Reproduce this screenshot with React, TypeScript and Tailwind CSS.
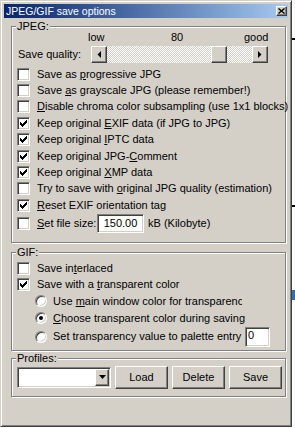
import type { ReactNode } from "react";

const raised =
  "border border-t-white border-l-white border-r-[#404040] border-b-[#404040] shadow-[inset_-1px_-1px_0_#808080] bg-[#d4d0c8]";
const sunken =
  "border border-t-[#808080] border-l-[#808080] border-r-white border-b-white shadow-[inset_1px_1px_0_#404040,inset_-1px_-1px_0_#d4d0c8] bg-white";

function U({ children }: { children: ReactNode }) {
  return <span className="underline decoration-1 underline-offset-[1px]">{children}</span>;
}

function Check({ checked }: { checked?: boolean }) {
  return (
    <span className={`flex h-[13px] w-[13px] shrink-0 items-center justify-center ${sunken}`}>
      {checked && (
        <svg width="7" height="7" viewBox="0 0 7 7" shapeRendering="crispEdges">
          <path
            d="M6 0h1v1h-1z M5 1h2v1h-2z M0 2h1v1h-1z M4 2h3v1h-3z M0 3h2v1h-2z M3 3h3v1h-3z M0 4h5v1h-5z M1 5h3v1h-3z M2 6h1v1h-1z"
            fill="#000"
          />
        </svg>
      )}
    </span>
  );
}

function Radio({ on }: { on?: boolean }) {
  return (
    <span className={`flex h-[12px] w-[12px] shrink-0 items-center justify-center rounded-full ${sunken}`}>
      {on && <span className="h-[4px] w-[4px] rounded-full bg-black" />}
    </span>
  );
}

function CheckRow({ checked, children }: { checked?: boolean; children: ReactNode }) {
  return (
    <div className="flex h-[16.4px] items-center gap-[7px] pl-[5px] whitespace-nowrap">
      <Check checked={checked} />
      <span>{children}</span>
    </div>
  );
}

function Group({ label, className, children }: { label: string; className?: string; children: ReactNode }) {
  return (
    <div
      className={`relative ml-[7px] w-[275px] border border-[#808080] shadow-[inset_1px_1px_0_#fff,1px_1px_0_#fff] ${className ?? ""}`}
    >
      <span className="absolute left-[4px] top-[-7px] bg-[#d4d0c8] px-[1px] leading-[13px]">{label}</span>
      {children}
    </div>
  );
}

function Arrow({ dir }: { dir: "left" | "right" | "down" }) {
  if (dir === "down")
    return (
      <svg width="7" height="4" viewBox="0 0 7 4">
        <polygon points="0,0 7,0 3.5,4" fill="#000" />
      </svg>
    );
  return (
    <svg width="4" height="7" viewBox="0 0 4 7">
      <polygon points={dir === "left" ? "4,0 4,7 0.5,3.5" : "0,0 0,7 3.5,3.5"} fill="#000" />
    </svg>
  );
}

export default function App() {
  return (
    <div className="flex h-[428px] w-[295px] bg-white font-['Liberation_Sans',Arial,sans-serif] text-[11px] leading-[13px] text-black">
      <div className="flex h-[427px] w-[292px] flex-col border border-t-[#d4d0c8] border-l-[#d4d0c8] border-r-[#404040] border-b-[#404040] bg-[#d4d0c8] px-[3px] pt-[3px] shadow-[inset_1px_1px_0_#fff,inset_-1px_-1px_0_#808080]">
        {/* Title bar */}
        <div className="flex h-[14px] items-center bg-linear-to-r from-[#0a246a] to-[#a6caf0] pl-[2px] pr-[1px]">
          <span className="flex-1 text-[10.5px] text-white">JPEG/GIF save options</span>
          <span className={`flex h-[10px] w-[11px] items-center justify-center ${raised}`}>
            <svg width="7" height="6" viewBox="0 0 7 6">
              <path d="M0.5 0.5L6.5 5.5M6.5 0.5L0.5 5.5" stroke="#000" strokeWidth="1.4" />
            </svg>
          </span>
        </div>

        {/* JPEG */}
        <Group label="JPEG:" className="mt-[8px] pb-[8px]">
          <div className="mt-[4px] flex h-[13px]">
            <span className="ml-[76px] w-[83px]">low</span>
            <span className="w-[73px]">80</span>
            <span>good</span>
          </div>
          <div className="mt-[2px] flex h-[17px] items-center pl-[6px]">
            <span className="w-[73px]">Save quality:</span>
            <div className="flex h-[17px] w-[177px]">
              <span className={`flex w-[16px] items-center justify-center ${raised}`}>
                <Arrow dir="left" />
              </span>
              <span className="w-[104px] bg-[image:repeating-conic-gradient(#fff_0%_25%,#d4d0c8_0%_50%)] bg-[length:2px_2px]" />
              <span className={`w-[16px] ${raised}`} />
              <span className="flex-1 bg-[image:repeating-conic-gradient(#fff_0%_25%,#d4d0c8_0%_50%)] bg-[length:2px_2px]" />
              <span className={`flex w-[16px] items-center justify-center ${raised}`}>
                <Arrow dir="right" />
              </span>
            </div>
          </div>
          <div className="mt-[3px]">
            <CheckRow>
              Save as <U>p</U>rogressive JPG
            </CheckRow>
            <CheckRow>
              Save <U>a</U>s grayscale JPG (please remember!)
            </CheckRow>
            <CheckRow>
              <U>D</U>isable chroma color subsampling (use 1x1 blocks)
            </CheckRow>
            <CheckRow checked>
              Keep original <U>E</U>XIF data (if JPG to JPG)
            </CheckRow>
            <CheckRow checked>
              Keep original <U>I</U>PTC data
            </CheckRow>
            <CheckRow checked>
              Keep original JPG-<U>C</U>omment
            </CheckRow>
            <CheckRow checked>
              Keep original <U>X</U>MP data
            </CheckRow>
            <CheckRow>
              Try to save with <U>o</U>riginal JPG quality (estimation)
            </CheckRow>
            <CheckRow checked>
              <U>R</U>eset EXIF orientation tag
            </CheckRow>
          </div>
          <div className="flex h-[20px] items-center gap-[7px] pl-[5px] whitespace-nowrap">
            <Check />
            <span className="w-[53px]">
              <U>S</U>et file size:
            </span>
            <span className={`flex h-[19px] w-[47px] items-center justify-center ${sunken}`}>150.00</span>
            <span className="-ml-[3px]">kB (Kilobyte)</span>
          </div>
        </Group>

        {/* GIF */}
        <Group label="GIF:" className="mt-[9px] pt-[8px] pb-[3px]">
          <div className="flex h-[16px] items-center gap-[7px] pl-[5px] whitespace-nowrap">
            <Check />
            <span>
              Save in<U>t</U>erlaced
            </span>
          </div>
          <div className="flex h-[16px] items-center gap-[7px] pl-[5px] whitespace-nowrap">
            <Check checked />
            <span>
              Save with a <U>t</U>ransparent color
            </span>
          </div>
          <div className="flex h-[17px] items-center gap-[6px] pl-[23px] whitespace-nowrap">
            <Radio />
            <span className="w-[189px] overflow-hidden">
              Use <U>m</U>ain window color for transparency
            </span>
          </div>
          <div className="flex h-[17px] items-center gap-[6px] pl-[23px] whitespace-nowrap">
            <Radio on />
            <span className="w-[196px] overflow-hidden">
              <U>C</U>hoose transparent color during saving
            </span>
          </div>
          <div className="flex h-[20px] items-center gap-[6px] pl-[23px] whitespace-nowrap">
            <Radio />
            <span className="w-[191px] overflow-hidden">Set transparency value to palette entry</span>
            <span className={`-ml-[5px] h-[20px] w-[25px] pl-[2px] pt-[1px] ${sunken}`}>0</span>
          </div>
        </Group>

        {/* Profiles */}
        <Group label="Profiles:" className="mt-[7px] py-[7px]">
          <div className="flex h-[23px] items-center gap-[4px] pl-[5px]">
            <div className={`flex h-[21px] w-[94px] items-center justify-end pr-[1px] ${sunken}`}>
              <span className={`flex h-[17px] w-[14px] items-center justify-center ${raised}`}>
                <Arrow dir="down" />
              </span>
            </div>
            <button className={`h-[23px] w-[53px] ${raised}`}>Load</button>
            <button className={`h-[23px] w-[53px] ${raised}`}>Delete</button>
            <button className={`h-[23px] w-[53px] ${raised}`}>Save</button>
          </div>
        </Group>
      </div>

      {/* window behind, peeking out on the right */}
      <div className="flex w-[3px] flex-col">
        <span className="mt-[38px] h-[2px] bg-black" />
        <span className="mt-[165px] h-[2px] bg-black" />
        <span className="mt-[83px] h-[10px] bg-[#3a6ea5]" />
      </div>
    </div>
  );
}
